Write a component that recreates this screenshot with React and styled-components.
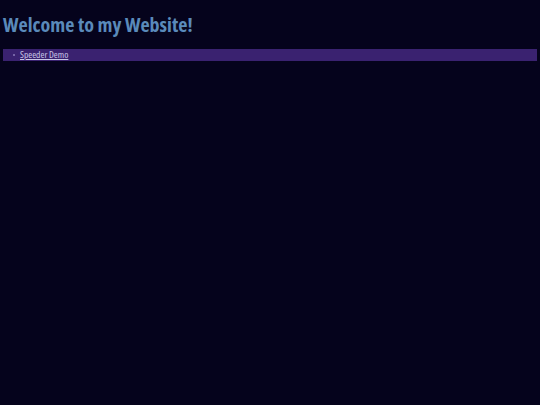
import styled, { createGlobalStyle } from "styled-components";

const GlobalStyle = createGlobalStyle`
  html, body {
    margin: 0;
    background: #05031c;
  }
  body {
    padding: 3px;
    font-family: "Open Sans", "DejaVu Sans", sans-serif;
    font-stretch: 75%;
  }
`;

const Title = styled.h1`
  margin: 10px 0 13px;
  font-size: 20px;
  font-weight: bold;
  font-stretch: 75%;
  color: #5a8aba;
  line-height: 23px;
`;

const List = styled.ul`
  margin: 0;
  padding: 0 0 0 10px;
  background: #3a2270;
  font-size: 9.5px;
  line-height: 12px;
  font-stretch: 87.5%;
  list-style: none;
`;

const Item = styled.li`
  display: flex;
  align-items: center;
  gap: 5px;

  &::before {
    content: "";
    width: 2px;
    height: 2px;
    border-radius: 50%;
    background: #8a7ab8;
  }
`;

const Link = styled.a`
  color: #c8c6e6;
  text-decoration: underline;
`;

const App = () => {
  return (
    <>
      <GlobalStyle />
      <Title>Welcome to my Website!</Title>
      <List>
        <Item>
          <Link href="#">Speeder Demo</Link>
        </Item>
      </List>
    </>
  );
};

export default App;
